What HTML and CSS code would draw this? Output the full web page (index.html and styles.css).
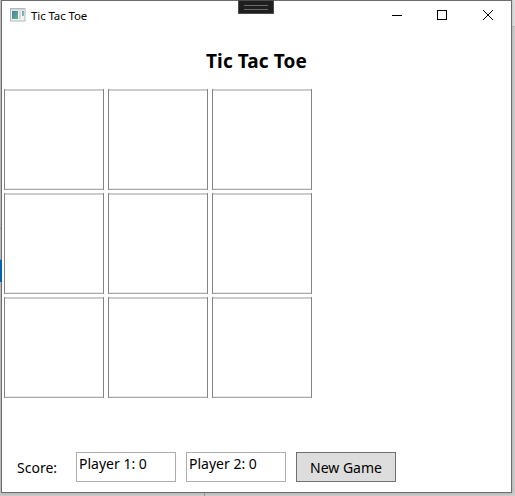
FILE: index.html
```html
<!DOCTYPE html>
<html lang="en">
<head>
<meta charset="utf-8">
<title>Tic Tac Toe</title>
<link rel="stylesheet" href="styles.css">
</head>
<body>
<div class="backdrop-mark"></div>
<div class="backdrop-rule"></div>
<div class="backdrop-tick"></div>
<main class="window">
  <div class="debug-tab"></div>
  <header class="titlebar">
    <svg class="app-icon" width="16" height="14" viewBox="0 0 16 14">
      <defs><linearGradient id="pane" x1="0" y1="0" x2="1" y2="1"><stop offset="0" stop-color="#4c7aa8"/><stop offset="1" stop-color="#62b984"/></linearGradient></defs>
      <rect x=".5" y=".5" width="14.5" height="12.5" fill="#f0f2f3" stroke="#b3b8bb"/>
      <rect x="1" y="1" width="13.5" height="1.5" fill="#d4d8da"/>
      <rect x="2" y="3" width="6" height="8" fill="url(#pane)"/>
      <rect x="9" y="3" width="2" height="8" fill="#d8dcde"/>
      <rect x="12" y="3" width="2" height="5" fill="url(#pane)" opacity=".75"/>
    </svg>
    <span class="caption">Tic Tac Toe</span>
    <svg class="controls" width="101" height="10" viewBox="0 0 101 10" fill="none" stroke="#000">
      <path d="M0 5.5h10M45.500 .5h9v9h-9z" shape-rendering="crispEdges"/>
      <path d="M91 0l10 10M101 0l-10 10"/>
    </svg>
  </header>
  <h1 class="title">Tic Tac Toe</h1>
  <section class="board">
    <div class="cell"></div><div class="cell"></div><div class="cell"></div>
    <div class="cell"></div><div class="cell"></div><div class="cell"></div>
    <div class="cell"></div><div class="cell"></div><div class="cell"></div>
  </section>
  <footer class="scorebar">
    <span class="label">Score:</span>
    <div class="field">Player 1: 0</div>
    <div class="field">Player 2: 0</div>
    <button class="new-game">New Game</button>
  </footer>
</main>
</body>
</html>
```
FILE: styles.css
```css
* { box-sizing: border-box; }
body {
  margin: 0;
  width: 515px;
  height: 496px;
  overflow: hidden;
  position: relative;
  padding-left: 1px;
  background: #cbcbcb;
  color: #000;
  font: 14px "Noto Sans", sans-serif;
}
.backdrop-mark {
  position: absolute;
  z-index: 1;
  left: 0;
  top: 260px;
  width: 2px;
  height: 22px;
  background: #0062b8;
}
.backdrop-mark::before {
  content: "";
  position: absolute;
  left: 0;
  top: -32px;
  width: 1px;
  height: 30px;
  border: solid #999;
  border-width: 1px 0;
}
.backdrop-rule {
  position: absolute;
  left: 512px;
  top: 0;
  width: 3px;
  height: 27px;
  background: #dedede;
  border-bottom: 1px solid #bdbdbd;
}
.backdrop-tick {
  position: absolute;
  left: 204px;
  top: 493px;
  width: 1px;
  height: 3px;
  background: #999;
}
.window {
  position: relative;
  display: flex;
  flex-direction: column;
  width: 511px;
  height: 493px;
  background: #fff;
  border: 1px solid #6d6d6d;
  box-shadow: 0 0 3px rgba(0, 0, 0, .2);
}
.debug-tab {
  position: absolute;
  left: 236px;
  top: -1px;
  width: 36px;
  height: 14px;
  background: #1f1f1f;
  border: 1px solid #4b4b4b;
  display: flex;
  align-items: center;
  justify-content: center;
}
.debug-tab::before {
  content: "";
  width: 24px;
  height: 3px;
  border: solid #6a6a6a;
  border-width: 1px 0;
}
.titlebar {
  display: flex;
  align-items: center;
  height: 28px;
  padding: 0 18px 0 8px;
}
.caption {
  margin-left: 5px;
  font-size: 11.500px;
  letter-spacing: -.1px;
  white-space: nowrap;
}
.title {
  height: 60px;
  margin: 0;
  padding-top: 19px;
  text-align: center;
  font-size: 19px;
  line-height: 27px;
  letter-spacing: .1px;
}
.controls { margin-left: auto; }
.board {
  display: grid;
  grid-template-columns: repeat(3, 100px);
  grid-auto-rows: 101px;
  gap: 3px 4px;
  padding-left: 2px;
}
.cell {
  border: solid #858585;
  border-width: 0 1px;
  background: linear-gradient(#ccc 2px, #fff 2px, #fff 99px, #e8e8e8 99px, #e8e8e8 100px, #aaa 100px);
}
.scorebar {
  display: flex;
  align-items: center;
  gap: 10px;
  height: 30px;
  margin-top: auto;
  margin-bottom: 10px;
  padding-left: 15px;
}
.label { width: 49px; }
.field {
  width: 100px;
  height: 30px;
  padding-left: 2px;
  border: 1px solid #abadb3;
  line-height: 21px;
  white-space: nowrap;
}
.new-game {
  width: 100px;
  height: 30px;
  padding: 0;
  border: 1px solid #707070;
  background: #ddd;
  color: #000;
  font: inherit;
}
```
